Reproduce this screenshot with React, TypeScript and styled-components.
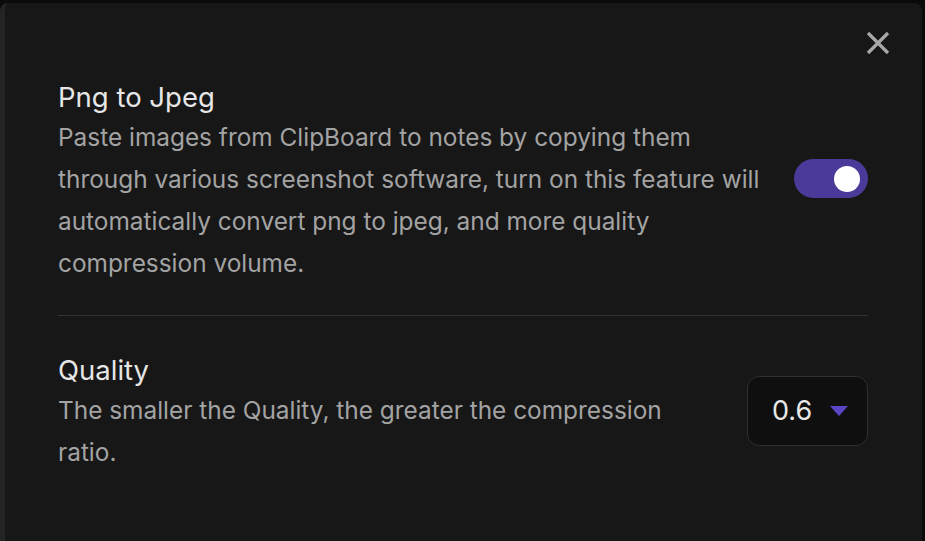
import React from 'react'
import styled, { createGlobalStyle } from 'styled-components'

const GlobalStyle = createGlobalStyle`
  html, body {
    margin: 0;
    padding: 0;
    background: #0a0a0a;
    font-family: Inter, "Noto Sans", sans-serif;
    overflow: hidden;
  }
`

const Frame = styled.div`
  height: 541px;
  padding: 3px 3px 0 0;
  box-sizing: border-box;
  display: flex;
`

const Panel = styled.div`
  position: relative;
  flex: 1;
  background: #171717;
  border-left: 5px solid #242424;
  border-radius: 8px 8px 0 0;
  padding: 76px 54px 0 53px;
  box-sizing: border-box;
`

const CloseButton = styled.button`
  position: absolute;
  top: 24px;
  right: 28px;
  width: 32px;
  height: 32px;
  padding: 0;
  border: none;
  background: transparent;
  display: flex;
  align-items: center;
  justify-content: center;
  cursor: pointer;
`

const Setting = styled.div`
  display: flex;
  align-items: center;
  gap: 30px;
`

const Info = styled.div`
  flex: 1;
  min-width: 0;
`

const Title = styled.div`
  color: #e6e6e6;
  font-size: 27.5px;
  line-height: 36px;
  font-weight: 400;
`

const Description = styled.div`
  color: #a3a3a3;
  font-size: 24.4px;
  line-height: 42px;
  margin-top: 1px;
`

const Divider = styled.hr`
  border: none;
  border-top: 1px solid #333;
  margin: 31px 0 36px;
`

const Toggle = styled.div<{ $on: boolean }>`
  width: 74px;
  height: 39px;
  margin-bottom: 6px;
  border-radius: 20px;
  background: ${({ $on }) => ($on ? '#4b3a9a' : '#3a3a3a')};
  display: flex;
  align-items: center;
  justify-content: ${({ $on }) => ($on ? 'flex-end' : 'flex-start')};
  padding: 0 8px;
  box-sizing: border-box;
  flex-shrink: 0;
`

const Knob = styled.div`
  width: 26px;
  height: 26px;
  border-radius: 50%;
  background: #fff;
`

const Select = styled.div`
  width: 121px;
  height: 70px;
  margin-bottom: 4px;
  box-sizing: border-box;
  border: 1px solid #2f2f2f;
  border-radius: 12px;
  background: #0f0f0f;
  display: flex;
  align-items: center;
  padding-left: 24px;
  gap: 18px;
  flex-shrink: 0;
  color: #e8e8e8;
  font-size: 27px;
`

const Caret = styled.span`
  width: 0;
  height: 0;
  border-left: 9px solid transparent;
  border-right: 9px solid transparent;
  border-top: 10px solid #5b45c4;
  margin-top: 1px;
`

const App: React.FC = () => {
  return (
    <>
      <GlobalStyle />
      <Frame>
        <Panel>
          <CloseButton aria-label="close">
            <svg width="24" height="24" viewBox="0 0 24 24">
              <path d="M2 2 L22 22 M22 2 L2 22" stroke="#a8a8a8" strokeWidth="3.2" strokeLinecap="butt" />
            </svg>
          </CloseButton>
          <Setting>
            <Info>
              <Title>Png to Jpeg</Title>
              <Description>
                Paste images from ClipBoard to notes by copying them through various screenshot software, turn on
                this feature will automatically convert png to jpeg, and more quality compression volume.
              </Description>
            </Info>
            <Toggle $on>
              <Knob />
            </Toggle>
          </Setting>
          <Divider />
          <Setting>
            <Info>
              <Title>Quality</Title>
              <Description>The smaller the Quality, the greater the compression ratio.</Description>
            </Info>
            <Select>
              0.6
              <Caret />
            </Select>
          </Setting>
        </Panel>
      </Frame>
    </>
  )
}

export default App
